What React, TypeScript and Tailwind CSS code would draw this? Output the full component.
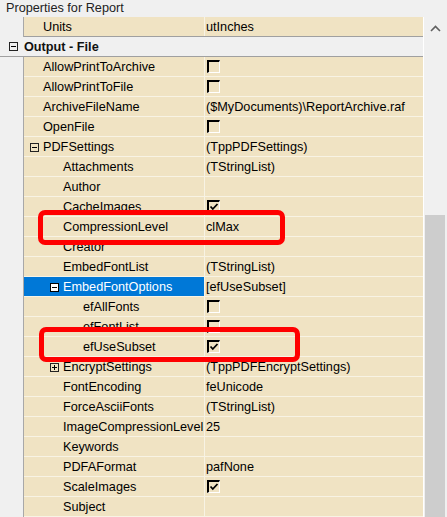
type Kind = 'text' | 'check' | 'checked';

type Row = {
  name: string;
  value?: string;
  level?: number;
  kind?: Kind;
  expander?: 'minus' | 'plus';
  selected?: boolean;
  category?: boolean;
};

const rows: Row[] = [
  { name: 'Units', value: 'utInches', level: 1 },
  { name: 'Output - File', category: true },
  { name: 'AllowPrintToArchive', level: 1, kind: 'check' },
  { name: 'AllowPrintToFile', level: 1, kind: 'check' },
  { name: 'ArchiveFileName', level: 1, value: '($MyDocuments)\\ReportArchive.raf' },
  { name: 'OpenFile', level: 1, kind: 'check' },
  { name: 'PDFSettings', level: 1, expander: 'minus', value: '(TppPDFSettings)' },
  { name: 'Attachments', level: 2, value: '(TStringList)' },
  { name: 'Author', level: 2 },
  { name: 'CacheImages', level: 2, kind: 'checked' },
  { name: 'CompressionLevel', level: 2, value: 'clMax' },
  { name: 'Creator', level: 2 },
  { name: 'EmbedFontList', level: 2, value: '(TStringList)' },
  { name: 'EmbedFontOptions', level: 2, expander: 'minus', selected: true, value: '[efUseSubset]' },
  { name: 'efAllFonts', level: 3, kind: 'check' },
  { name: 'efFontList', level: 3, kind: 'check' },
  { name: 'efUseSubset', level: 3, kind: 'checked' },
  { name: 'EncryptSettings', level: 2, expander: 'plus', value: '(TppPDFEncryptSettings)' },
  { name: 'FontEncoding', level: 2, value: 'feUnicode' },
  { name: 'ForceAsciiFonts', level: 2, value: '(TStringList)' },
  { name: 'ImageCompressionLevel', level: 2, value: '25' },
  { name: 'Keywords', level: 2 },
  { name: 'PDFAFormat', level: 2, value: 'pafNone' },
  { name: 'ScaleImages', level: 2, kind: 'checked' },
  { name: 'Subject', level: 2 },
];

const Expander = ({ type, inverted }: { type: 'minus' | 'plus'; inverted?: boolean }) => (
  <span
    className={`relative inline-flex w-[9px] h-[9px] items-center justify-center border ${
      inverted ? 'border-black bg-white' : 'border-[#222]'
    }`}
  >
    <span className="absolute w-[5px] h-[1px] bg-black" />
    {type === 'plus' && <span className="absolute w-[1px] h-[5px] bg-black" />}
  </span>
);

const CheckBox = ({ checked }: { checked?: boolean }) => (
  <span className="relative block w-[13px] h-[13px] border-t-2 border-l-2 border-r border-b border-t-black border-l-black border-r-white border-b-white">
    {checked && (
      <svg className="absolute left-[0px] top-[0px]" width="10" height="10" viewBox="0 0 10 10">
        <path d="M1.5 4.5 L3.8 7 L8.5 2" fill="none" stroke="#000" strokeWidth="1.8" />
      </svg>
    )}
  </span>
);

const PropRow = ({ row, nextIsCategory }: { row: Row; nextIsCategory: boolean }) => {
  if (row.category) {
    return (
      <div className="flex h-[20px] items-center bg-[#f0f0f0] border-b border-[#a0a0a0]">
        <div className="w-[24px] flex justify-center pl-[3px]">
          <Expander type="minus" />
        </div>
        <span className="font-bold text-[#111] pt-[1px]">{row.name}</span>
      </div>
    );
  }

  const level = row.level ?? 1;
  const pad = level === 1 ? 'pl-[19px]' : level === 2 ? 'pl-[39px]' : 'pl-[59px]';

  return (
    <div className="flex h-[20px]">
      <div className="w-[24px] bg-[#f0f0f0] border-r border-[#a8a8a8]" />
      <div
        className={`flex-1 flex border-b ${
          nextIsCategory ? 'border-[#a0a0a0]' : 'border-[#f8f3e4]'
        } bg-[#f0e3c3]`}
      >
        <div
          className={`relative w-[180px] flex items-center ${pad} ${
            row.selected ? 'bg-[#0078d7] text-white' : 'text-black'
          }`}
        >
          {row.expander && (
            <span className="absolute top-[5px]" style={{ left: (level - 1) * 20 + 6 }}>
              <Expander type={row.expander} inverted={row.selected} />
            </span>
          )}
          <span className="whitespace-nowrap pt-[1px]">{row.name}</span>
        </div>
        <div className="w-[1px] bg-[#f8f3e4]" />
        <div className="flex-1 flex items-center pl-[1px] text-black whitespace-nowrap overflow-hidden">
          {row.kind === 'check' || row.kind === 'checked' ? (
            <span className="pl-[1px] self-start pt-[3px]">
              <CheckBox checked={row.kind === 'checked'} />
            </span>
          ) : (
            <span className="pt-[1px]">{row.value}</span>
          )}
        </div>
      </div>
    </div>
  );
};

export default function App() {
  return (
    <div
      className="relative w-[447px] h-[517px] overflow-hidden bg-[#f0f0f0] text-[12.7px] leading-none"
      style={{ fontFamily: '"Liberation Sans", Arial, sans-serif' }}
    >
      <div className="h-[17px] flex items-center pl-[6px] text-[#222]">Properties for Report</div>

      <div className="flex">
        <div className="w-[423px] flex flex-col">
          {rows.map((row, i) => (
            <PropRow key={row.name} row={row} nextIsCategory={!!rows[i + 1]?.category} />
          ))}
        </div>

        {/* Scrollbar */}
        <div className="w-[24px] flex flex-col bg-[#f0f0f0] border-l border-white">
          <div className="h-[22px] flex items-center justify-center">
            <svg width="11" height="7" viewBox="0 0 11 7">
              <path d="M1 6 L5.5 1.5 L10 6" fill="none" stroke="#606060" strokeWidth="1.6" />
            </svg>
          </div>
          <div className="h-[176px]" />
          <div className="flex-1 mx-[1px] mr-[2px] bg-[#cdcdcd]" />
        </div>
      </div>

      {/* Highlight boxes */}
      <div className="absolute left-[38px] top-[210px] w-[247px] h-[35px] border-[5px] border-[#ff0000] rounded-[7px]" />
      <div className="absolute left-[39px] top-[327px] w-[261px] h-[35px] border-[5px] border-[#ff0000] rounded-[7px]" />
    </div>
  );
}
